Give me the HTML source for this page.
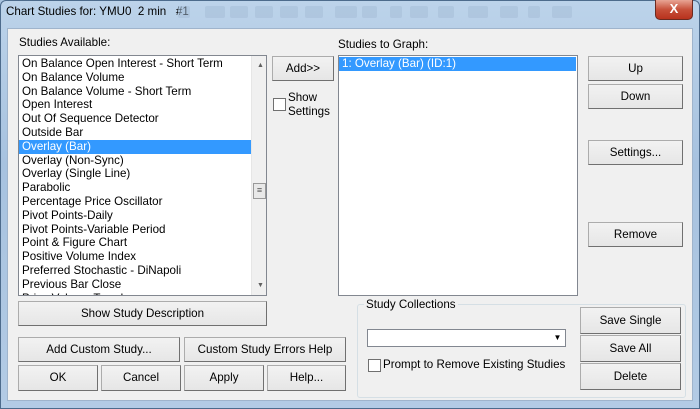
<!DOCTYPE html>
<html><head><style>
*{box-sizing:border-box;margin:0;padding:0}
body{width:700px;height:409px;position:relative;overflow:hidden;background:#a9c4e0;font-family:"Liberation Sans",Arial,sans-serif;font-size:11.6px;color:#000}
.frame{position:absolute;left:0;top:0;width:700px;height:409px;background:linear-gradient(180deg,#bcd3ea 0%,#a7c2df 40%,#b3cbe5 100%);border:1px solid #4d6b8c;border-radius:6px 6px 0 0}
.title{position:absolute;left:6px;top:5px;font-size:11.6px;color:#000}
.tb{position:absolute;top:6px;height:12px;background:#a4bcd6;opacity:.5;border-radius:2px}
.close{position:absolute;left:655px;top:0;width:38px;height:20px;background:linear-gradient(#e8a595,#c7503a 50%,#b8321d);border:1px solid #6b2a20;border-top:none;border-radius:0 0 5px 5px;color:#fff;font-weight:bold;text-align:center;font-size:13px;line-height:18px}
.client{position:absolute;left:7px;top:28px;width:686px;height:373px;background:#f0f0f0;border:1px solid #9fb4cc}
.a{position:absolute}
.lbl{position:absolute;white-space:nowrap}
.btn{position:absolute;background:linear-gradient(#f2f2f2,#e6e6e6);border:1px solid #acacac;border-right-color:#707070;border-bottom-color:#707070;text-align:center;white-space:nowrap}
.list{position:absolute;background:#fff;border:1px solid #828790;overflow:hidden}
.it{height:13.8px;line-height:13.8px;padding-left:3px;white-space:nowrap}
.sel{background:#3399ff;color:#fff}
.cb{position:absolute;width:13px;height:13px;background:#fff;border:1px solid #707070}
</style></head><body>
<div class="frame"></div>
<div class="title">Chart Studies for: YMU0&nbsp; 2 min&nbsp;&nbsp; #1</div>
<div class="tb" style="left:178px;width:12px"></div>
<div class="tb" style="left:205px;width:20px"></div>
<div class="tb" style="left:230px;width:18px"></div>
<div class="tb" style="left:255px;width:18px"></div>
<div class="tb" style="left:280px;width:18px"></div>
<div class="tb" style="left:305px;width:18px"></div>
<div class="tb" style="left:335px;width:22px"></div>
<div class="tb" style="left:362px;width:15px"></div>
<div class="tb" style="left:390px;width:12px"></div>
<div class="tb" style="left:410px;width:18px"></div>
<div class="tb" style="left:438px;width:16px"></div>
<div class="tb" style="left:468px;width:20px"></div>
<div class="tb" style="left:500px;width:18px"></div>
<div class="tb" style="left:528px;width:12px"></div>
<div class="tb" style="left:552px;width:20px"></div>
<div class="close">X</div>
<div class="client"></div>

<div class="lbl" style="left:19px;top:36px">Studies Available:</div>
<div class="lbl" style="left:338px;top:38px">Studies to Graph:</div>

<div class="list" style="left:18px;top:55px;width:249px;height:241px">
<div style="position:absolute;left:0;top:1px;width:232px">
<div class="it">On Balance Open Interest - Short Term</div>
<div class="it">On Balance Volume</div>
<div class="it">On Balance Volume - Short Term</div>
<div class="it">Open Interest</div>
<div class="it">Out Of Sequence Detector</div>
<div class="it">Outside Bar</div>
<div class="it sel">Overlay (Bar)</div>
<div class="it">Overlay (Non-Sync)</div>
<div class="it">Overlay (Single Line)</div>
<div class="it">Parabolic</div>
<div class="it">Percentage Price Oscillator</div>
<div class="it">Pivot Points-Daily</div>
<div class="it">Pivot Points-Variable Period</div>
<div class="it">Point &amp; Figure Chart</div>
<div class="it">Positive Volume Index</div>
<div class="it">Preferred Stochastic - DiNapoli</div>
<div class="it">Previous Bar Close</div>
<div class="it">Price Volume Trend</div>
</div>
<div style="position:absolute;left:232px;top:0;width:16px;height:239px;background:#f0f0f0;border-left:1px solid #e6e6e6">
<div style="position:absolute;left:5px;top:6px;font-size:7px;color:#606060">▲</div>
<div style="position:absolute;left:1px;top:127px;width:13px;height:16px;background:#e8e8e8;border:1px solid #999;font-size:9px;line-height:13px;text-align:center;color:#555">≡</div>
<div style="position:absolute;left:5px;top:226px;font-size:7px;color:#606060">▼</div>
</div>
</div>

<div class="btn" style="left:272px;top:56px;width:62px;height:25px;line-height:23px">Add&gt;&gt;</div>
<div class="cb" style="left:273px;top:98px"></div>
<div class="lbl" style="left:288px;top:91px;line-height:14px">Show<br>Settings</div>

<div class="list" style="left:338px;top:55px;width:240px;height:241px">
<div class="it sel" style="margin-top:1px;width:237px">1: Overlay (Bar) (ID:1)</div>
</div>

<div class="btn" style="left:588px;top:56px;width:95px;height:25px;line-height:23px">Up</div>
<div class="btn" style="left:588px;top:84px;width:95px;height:25px;line-height:23px">Down</div>
<div class="btn" style="left:588px;top:140px;width:95px;height:25px;line-height:23px">Settings...</div>
<div class="btn" style="left:588px;top:222px;width:95px;height:25px;line-height:23px">Remove</div>

<div class="btn" style="left:18px;top:301px;width:249px;height:25px;line-height:23px">Show Study Description</div>
<div class="btn" style="left:18px;top:337px;width:162px;height:25px;line-height:23px">Add Custom Study...</div>
<div class="btn" style="left:184px;top:337px;width:162px;height:25px;line-height:23px">Custom Study Errors Help</div>
<div class="btn" style="left:18px;top:365px;width:80px;height:26px;line-height:24px">OK</div>
<div class="btn" style="left:101px;top:365px;width:80px;height:26px;line-height:24px">Cancel</div>
<div class="btn" style="left:184px;top:365px;width:80px;height:26px;line-height:24px">Apply</div>
<div class="btn" style="left:267px;top:365px;width:79px;height:26px;line-height:24px">Help...</div>

<div class="a" style="left:357px;top:304px;width:329px;height:94px;border:1px solid #d5dfe5;border-radius:3px"></div>
<div class="lbl" style="left:364px;top:298px;background:#f0f0f0;padding:0 2px">Study Collections</div>
<div class="a" style="left:367px;top:329px;width:199px;height:18px;background:#fff;border:1px solid #828790"></div>
<div class="a" style="left:550px;top:330px;width:15px;height:16px;font-size:8px;line-height:16px;text-align:center">▼</div>
<div class="cb" style="left:368px;top:359px"></div>
<div class="lbl" style="left:383px;top:358px">Prompt to Remove Existing Studies</div>
<div class="btn" style="left:580px;top:307px;width:101px;height:27px;line-height:25px">Save Single</div>
<div class="btn" style="left:580px;top:335px;width:101px;height:27px;line-height:25px">Save All</div>
<div class="btn" style="left:580px;top:363px;width:101px;height:27px;line-height:25px">Delete</div>
</body></html>
